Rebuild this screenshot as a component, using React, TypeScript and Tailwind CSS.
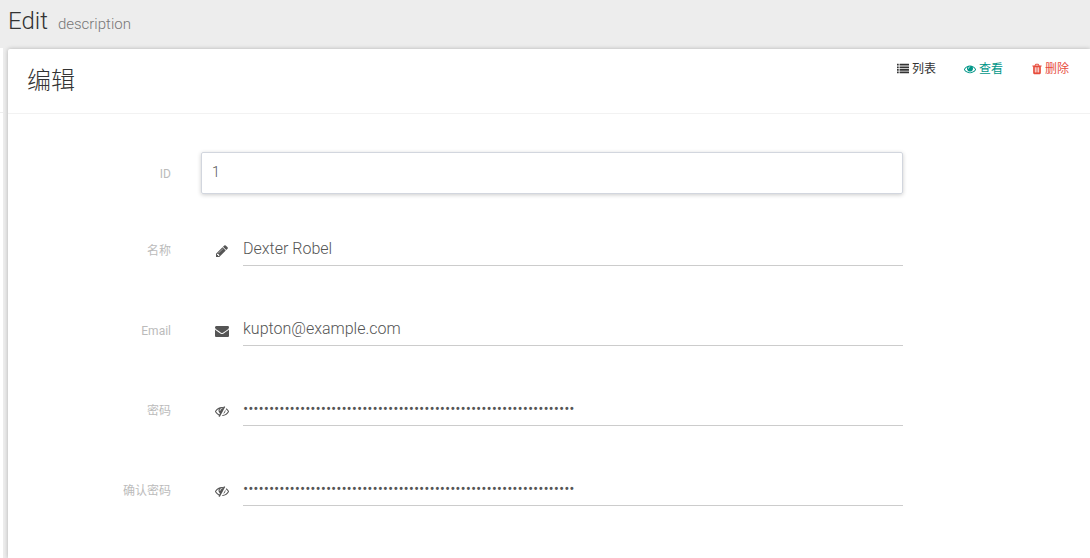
import React, { useState } from 'react';

interface IconProps {
  path: string;
  className?: string;
}

const icons = {
  list: 'M32 1280h192q32 0 32 32v192q0 32-32 32h-192q-32 0-32-32v-192q0-32 32-32zM32 896h192q32 0 32 32v192q0 32-32 32h-192q-32 0-32-32v-192q0-32 32-32zM32 512h192q32 0 32 32v192q0 32-32 32h-192q-32 0-32-32v-192q0-32 32-32zM32 128h192q32 0 32 32v192q0 32-32 32h-192q-32 0-32-32v-192q0-32 32-32zM416 1280h1344q32 0 32 32v192q0 32-32 32h-1344q-32 0-32-32v-192q0-32 32-32zM416 896h1344q32 0 32 32v192q0 32-32 32h-1344q-32 0-32-32v-192q0-32 32-32zM416 512h1344q32 0 32 32v192q0 32-32 32h-1344q-32 0-32-32v-192q0-32 32-32zM416 128h1344q32 0 32 32v192q0 32-32 32h-1344q-32 0-32-32v-192q0-32 32-32z',
  eye: 'M1664 960q-152-236-381-353 61 104 61 225 0 185-131.5 316.5t-316.5 131.5-316.5-131.5-131.5-316.5q0-121 61-225-229 117-381 353 133 205 333.5 326.5t434.5 121.5 434.5-121.5 333.5-326.5zm-720-384q0-20-14-34t-34-14q-125 0-214.5 89.5t-89.5 214.5q0 20 14 34t34 14 34-14 14-34q0-86 61-147t147-61q20 0 34-14t14-34zm848 384q0 34-20 69-140 230-376.5 368.5t-499.5 138.5-499.5-139-376.5-368q-20-35-20-69t20-69q140-229 376.5-368t499.5-139 499.5 139 376.5 368q20 35 20 69z',
  eyeSlash: 'M555 1335l78-141q-87-63-136-159t-49-203q0-121 61-225-229 117-381 353 167 258 427 375zm389-759q0-20-14-34t-34-14q-125 0-214.5 89.5t-89.5 214.5q0 20 14 34t34 14 34-14 14-34q0-86 61-147t147-61q20 0 34-14t14-34zm363-191q0 7-1 9-106 189-316 567t-315 566l-49 89q-10 16-28 16-12 0-134-70-16-10-16-28 0-12 44-87-143-65-263.5-173t-208.5-245q-20-31-20-69t20-69q153-235 380-371t496-136q89 0 180 17l54-97q10-16 28-16 5 0 18 6t31 15.5 33 18.5 31.5 18.5 19.5 11.5q16 10 16 27zm37 447q0 139-79 253.5t-209 164.5l280-502q8 45 8 84zm448 128q0 35-20 69-39 64-109 145-150 172-347.5 267t-419.5 95l74-132q212-18 392.5-137t301.5-307q-115-179-282-294l63-112q95 64 182.5 153t144.5 184q20 34 20 69z',
  envelope: 'M1792 710v794q0 66-47 113t-113 47h-1472q-66 0-113-47t-47-113v-794q44 49 101 87 362 246 497 345 57 42 92.5 65.5t94.5 48 110 24.5h2q51 0 110-24.5t94.5-48 92.5-65.5q170-123 498-345 57-39 100-87zm0-294q0 79-49 151t-122 123q-376 261-468 325-10 7-42.5 31t-54 38.5-52 32.5-57.5 27-50 9h-2q-23 0-50-9t-57.5-27-52-32.5-54-38.5-42.5-31q-91-64-262-182.5t-205-142.5q-62-42-117-115.5t-55-136.5q0-78 41.5-130t118.5-52h1472q65 0 112.5 47t47.5 113z',
  pencil: 'M491 1536l91-91-235-235-91 91v107h128v128h107zm523-928q0-22-22-22-10 0-17 7l-542 542q-7 7-7 17 0 22 22 22 10 0 17-7l542-542q7-7 7-17zm-54-192l416 416-832 832h-416v-416zm683 96q0 53-37 90l-166 166-416-416 166-165q36-38 90-38 53 0 91 38l235 234q37 39 37 91z',
  trash: 'M704 1376v-704q0-14-9-23t-23-9h-64q-14 0-23 9t-9 23v704q0 14 9 23t23 9h64q14 0 23-9t9-23zm256 0v-704q0-14-9-23t-23-9h-64q-14 0-23 9t-9 23v704q0 14 9 23t23 9h64q14 0 23-9t9-23zm256 0v-704q0-14-9-23t-23-9h-64q-14 0-23 9t-9 23v704q0 14 9 23t23 9h64q14 0 23-9t9-23zm-544-992h448l-48-117q-7-9-17-11h-317q-10 2-17 11zm928 32v64q0 14-9 23t-23 9h-96v948q0 83-47 143.5t-113 60.5h-832q-66 0-113-58.5t-47-141.5v-952h-96q-14 0-23-9t-9-23v-64q0-14 9-23t23-9h309l70-167q15-37 54-63t79-26h320q40 0 79 26t54 63l70 167h309q14 0 23 9t9 23z'
};

function Icon({ path, className }: IconProps) {
  return (
    <svg viewBox="0 0 1792 1792" fill="currentColor" aria-hidden="true" className={className}>
      <path d={path} />
    </svg>
  );
}

const fields = [
  { name: 'name', label: '名称', type: 'text', icon: icons.pencil },
  { name: 'email', label: 'Email', type: 'email', icon: icons.envelope },
  { name: 'password', label: '密码', type: 'password', icon: icons.eyeSlash },
  { name: 'passwordConfirmation', label: '确认密码', type: 'password', icon: icons.eyeSlash }
];

export default function App() {
  const [formData, setFormData] = useState<Record<string, string>>({
    name: 'Dexter Robel',
    email: 'kupton@example.com',
    password: 'x'.repeat(64),
    passwordConfirmation: 'x'.repeat(64)
  });

  return (
    <div className="flex min-h-screen flex-col overflow-hidden bg-[#ededed] font-[Roboto,'Noto_Sans_CJK_SC',sans-serif] text-[#333]">
      <header className="flex h-12 items-baseline gap-2.5 px-2 pt-[5px]">
        <h1 className="text-2xl font-light">Edit</h1>
        <small className="text-[15px] font-light text-[#777]">description</small>
      </header>

      <div className="flex flex-1 gap-[5px]">
        <aside className="w-[3px] bg-white">
          <div className="h-[65px] border-b border-[#eee]" />
        </aside>

        <main className="mt-px flex-1 rounded-tl-xs bg-white shadow-[0_0_4px_rgba(0,0,0,0.25)]">
          <div className="flex h-[65px] items-start justify-between border-b border-[#f2f2f2] pr-[21px] pl-[19px]">
            <h2 className="pt-3.5 text-2xl leading-9 font-light">编辑</h2>
            <nav className="flex gap-7 pt-2.5 text-xs leading-5">
              <a href="#list" className="flex items-center gap-[3px]">
                <Icon path={icons.list} className="size-3" />列表
              </a>
              <a href="#view" className="flex items-center gap-[3px] text-[#009688]">
                <Icon path={icons.eye} className="size-3" />查看
              </a>
              <button type="button" className="flex items-center gap-[2px] text-[#e74c3c]">
                <Icon path={icons.trash} className="size-3" />删除
              </button>
            </nav>
          </div>

          <form className="pt-[38px] pr-[187px]" onSubmit={(e) => e.preventDefault()}>
            <div className="mb-[38px] grid grid-cols-[163px_minmax(0,1fr)] items-center gap-x-[30px]">
              <label htmlFor="id" className="pt-0.5 text-right text-xs text-[#bbb]">ID</label>
              <input
                id="id"
                type="text"
                readOnly
                value="1"
                className="h-[42px] w-full rounded-xs border border-[#d2d6de] px-2.5 pb-0.5 text-sm font-light text-[#555] shadow-[0_1px_4px_rgba(0,0,0,0.2)] outline-none"
              />
            </div>

            {fields.map((field) => (
              <div key={field.name} className="mb-[46px] grid grid-cols-[163px_minmax(0,1fr)] items-center gap-x-[30px]">
                <label htmlFor={field.name} className="pt-1 text-right text-xs text-[#bbb]">{field.label}</label>
                <div className="flex items-center gap-3.5 pl-3.5">
                  <Icon path={field.icon} className="mt-1 size-3.5 shrink-0 text-[#555]" />
                  <input
                    id={field.name}
                    type={field.type}
                    value={formData[field.name]}
                    onChange={(e) => setFormData(prev => ({ ...prev, [field.name]: e.target.value }))}
                    className="h-[34px] min-w-0 flex-1 border-b border-[#ccc] text-base font-light text-[#555] outline-none"
                  />
                </div>
              </div>
            ))}
          </form>
        </main>
      </div>
    </div>
  );
}
